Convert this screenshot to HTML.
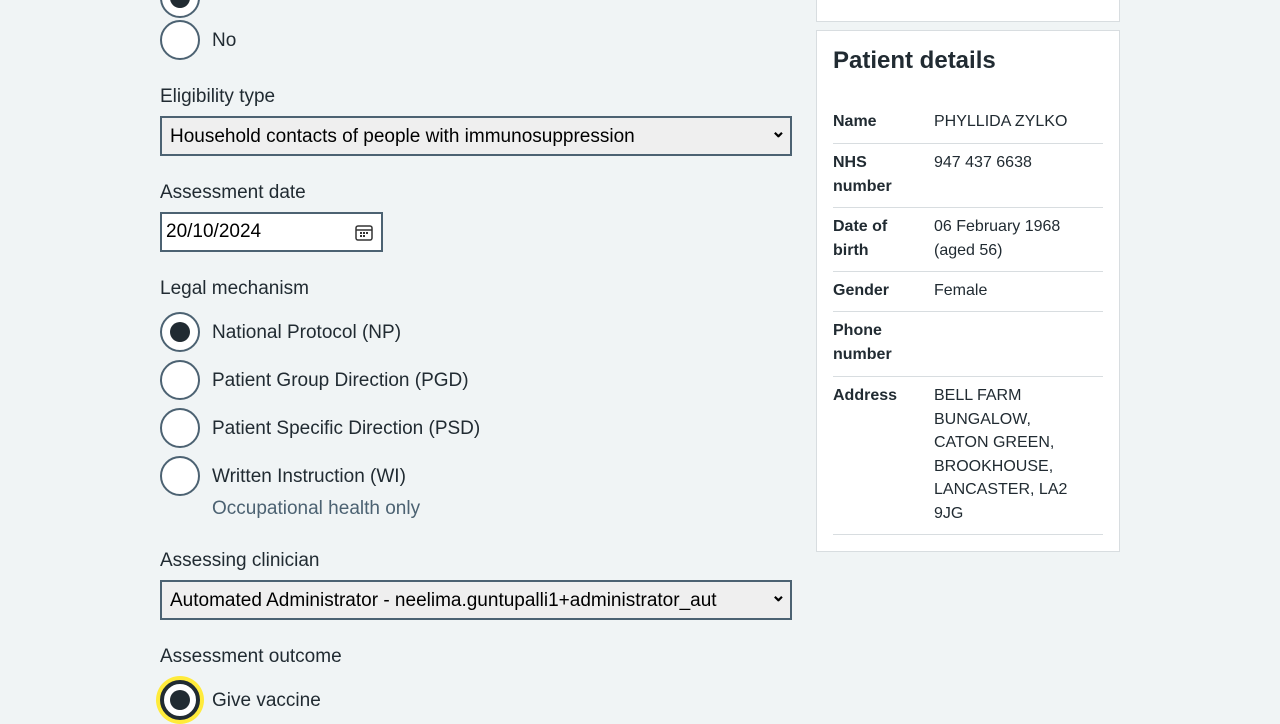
<!DOCTYPE html>
<html><head><style>
body{margin:0;background:#f0f4f5;font-family:"Liberation Sans",sans-serif;color:#212b32;width:1280px;height:720px;overflow:hidden;position:relative}
.a{position:absolute}
.lbl{font-size:19px}
.radio{position:absolute;width:36px;height:36px;border:2px solid #4c6272;border-radius:50%;background:#fff;box-sizing:content-box}
.radio.on::after{content:"";position:absolute;left:8px;top:8px;width:20px;height:20px;border-radius:50%;background:#212b32}
.rt{position:absolute;left:212px;font-size:19px}
.sel{position:absolute;left:160px;height:36px;border:2px solid #4c6272;background:#efefef;font-size:19px;line-height:38px;padding-left:8px;box-sizing:content-box;width:620px;white-space:nowrap;overflow:hidden;color:#000}
.sel::after{content:"⌄";position:absolute;right:4px;top:-6px;font-size:18px;font-weight:bold}
.card{position:absolute;left:816px;width:302px;background:#fff;border:1px solid #d8dde0}
.row{position:absolute;left:833px;width:270px;border-bottom:1px solid #d8dde0;font-size:16px;line-height:23.5px}
.row b{position:absolute;left:0;top:1px;width:90px}
.row span{position:absolute;left:101px;top:1px;width:140px}
</style></head><body>
<div class="radio on" style="left:160px;top:-22px"></div>
<div class="radio" style="left:160px;top:20px"></div><div class="rt" style="top:30px">No</div>
<div class="a lbl" style="left:160px;top:86px">Eligibility type</div>
<div class="sel" style="top:116px">Household contacts of people with immunosuppression</div>
<div class="a lbl" style="left:160px;top:182px">Assessment date</div>
<div class="a" style="left:160px;top:212px;height:36px;border:2px solid #4c6272;background:#fff;font-size:19px;line-height:36px;padding-left:4px;box-sizing:content-box;width:215px;color:#000">20/10/2024
<svg style="position:absolute;right:8px;top:10px" width="18" height="18" viewBox="0 0 18 18"><rect x="1" y="2" width="16" height="14" rx="2" fill="none" stroke="#333" stroke-width="1.5"/><line x1="1" y1="6" x2="17" y2="6" stroke="#333" stroke-width="1.5"/><g fill="#333"><rect x="5" y="8" width="2" height="2"/><rect x="8" y="8" width="2" height="2"/><rect x="11" y="8" width="2" height="2"/><rect x="5" y="11" width="2" height="2"/><rect x="8" y="11" width="2" height="2"/></g></svg></div>
<div class="a lbl" style="left:160px;top:278px">Legal mechanism</div>
<div class="radio on" style="left:160px;top:312px"></div><div class="rt" style="top:322px">National Protocol (NP)</div>
<div class="radio" style="left:160px;top:360px"></div><div class="rt" style="top:370px">Patient Group Direction (PGD)</div>
<div class="radio" style="left:160px;top:408px"></div><div class="rt" style="top:418px">Patient Specific Direction (PSD)</div>
<div class="radio" style="left:160px;top:456px"></div><div class="rt" style="top:466px">Written Instruction (WI)</div>
<div class="rt" style="top:498px;color:#4c6272">Occupational health only</div>
<div class="a lbl" style="left:160px;top:550px">Assessing clinician</div>
<div class="sel" style="top:580px">Automated Administrator - neelima.guntupalli1+administrator_aut</div>
<div class="a lbl" style="left:160px;top:646px">Assessment outcome</div>
<div class="a" style="left:156px;top:676px;width:48px;height:48px;border-radius:50%;background:#ffeb3b"></div>
<div class="radio" style="left:160px;top:680px;border:4px solid #212b32;width:32px;height:32px"><div style="position:absolute;left:6px;top:6px;width:20px;height:20px;border-radius:50%;background:#212b32"></div></div>
<div class="rt" style="top:690px">Give vaccine</div>

<div class="card" style="top:-10px;height:30px"></div>
<div class="card" style="top:30px;height:520px"></div>
<div class="a" style="left:833px;top:47px;font-size:24px;font-weight:bold">Patient details</div>
<div class="row" style="top:109px;height:34px"><b>Name</b><span>PHYLLIDA ZYLKO</span></div>
<div class="row" style="top:150px;height:57px"><b>NHS number</b><span>947 437 6638</span></div>
<div class="row" style="top:214px;height:57px"><b>Date of birth</b><span>06 February 1968 (aged 56)</span></div>
<div class="row" style="top:278px;height:33px"><b>Gender</b><span>Female</span></div>
<div class="row" style="top:318px;height:58px"><b>Phone number</b><span></span></div>
<div class="row" style="top:383px;height:151px"><b>Address</b><span style="width:135px">BELL FARM BUNGALOW, CATON GREEN, BROOKHOUSE, LANCASTER, LA2 9JG</span></div>
</body></html>
